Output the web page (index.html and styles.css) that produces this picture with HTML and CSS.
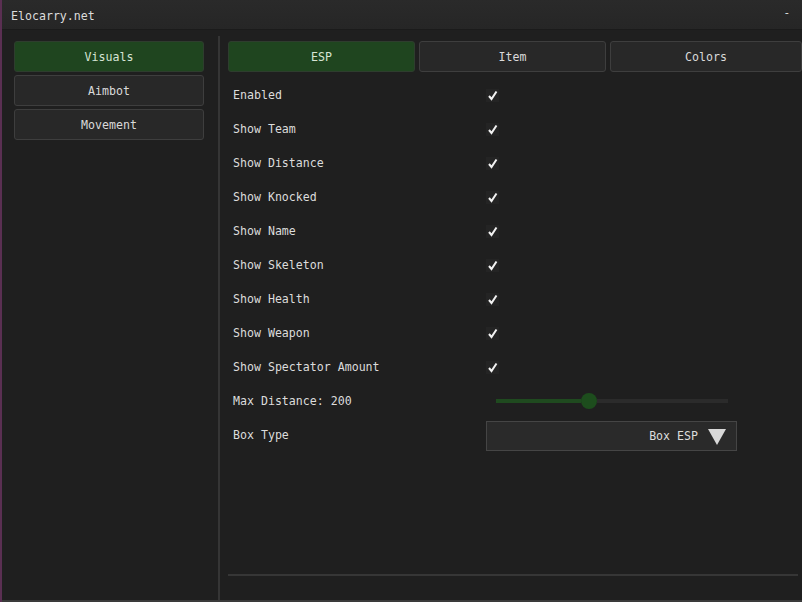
FILE: index.html
```html
<!DOCTYPE html>
<html>
<head>
<meta charset="utf-8">
<link rel="stylesheet" href="styles.css">
</head>
<body>
<div class="window">
  <div class="titlebar">
    <span class="title">Elocarry.net</span>
    <span class="minimize">-</span>
  </div>
  <div class="main">
    <div class="sidebar">
      <div class="btn active">Visuals</div>
      <div class="btn">Aimbot</div>
      <div class="btn">Movement</div>
    </div>
    <div class="divider"></div>
    <div class="content">
      <div class="tabs">
        <div class="btn tab active">ESP</div>
        <div class="btn tab">Item</div>
        <div class="btn tab last">Colors</div>
      </div>
      <div class="rows">
        <div class="row"><span class="label">Enabled</span><span class="check"><svg viewBox="0 0 13 13" width="13" height="13"><path d="M3 7 L5.5 10 L10.5 2.5" fill="none" stroke="#f2f2f2" stroke-width="2"/></svg></span></div>
        <div class="row"><span class="label">Show Team</span><span class="check"><svg viewBox="0 0 13 13" width="13" height="13"><path d="M3 7 L5.5 10 L10.5 2.5" fill="none" stroke="#f2f2f2" stroke-width="2"/></svg></span></div>
        <div class="row"><span class="label">Show Distance</span><span class="check"><svg viewBox="0 0 13 13" width="13" height="13"><path d="M3 7 L5.5 10 L10.5 2.5" fill="none" stroke="#f2f2f2" stroke-width="2"/></svg></span></div>
        <div class="row"><span class="label">Show Knocked</span><span class="check"><svg viewBox="0 0 13 13" width="13" height="13"><path d="M3 7 L5.5 10 L10.5 2.5" fill="none" stroke="#f2f2f2" stroke-width="2"/></svg></span></div>
        <div class="row"><span class="label">Show Name</span><span class="check"><svg viewBox="0 0 13 13" width="13" height="13"><path d="M3 7 L5.5 10 L10.5 2.5" fill="none" stroke="#f2f2f2" stroke-width="2"/></svg></span></div>
        <div class="row"><span class="label">Show Skeleton</span><span class="check"><svg viewBox="0 0 13 13" width="13" height="13"><path d="M3 7 L5.5 10 L10.5 2.5" fill="none" stroke="#f2f2f2" stroke-width="2"/></svg></span></div>
        <div class="row"><span class="label">Show Health</span><span class="check"><svg viewBox="0 0 13 13" width="13" height="13"><path d="M3 7 L5.5 10 L10.5 2.5" fill="none" stroke="#f2f2f2" stroke-width="2"/></svg></span></div>
        <div class="row"><span class="label">Show Weapon</span><span class="check"><svg viewBox="0 0 13 13" width="13" height="13"><path d="M3 7 L5.5 10 L10.5 2.5" fill="none" stroke="#f2f2f2" stroke-width="2"/></svg></span></div>
        <div class="row"><span class="label">Show Spectator Amount</span><span class="check"><svg viewBox="0 0 13 13" width="13" height="13"><path d="M3 7 L5.5 10 L10.5 2.5" fill="none" stroke="#f2f2f2" stroke-width="2"/></svg></span></div>
        <div class="row"><span class="label">Max Distance: 200</span>
          <div class="slider"><div class="fill"></div><div class="knob"></div><div class="rest"></div></div>
        </div>
        <div class="row"><span class="label">Box Type</span>
          <div class="combo"><span class="combo-text">Box ESP</span><svg class="arrow" viewBox="0 0 18 18" width="18" height="18"><path d="M0 2 L18 2 L9 18 Z" fill="#d8d8d8"/></svg></div>
        </div>
      </div>
      <div class="spacer"></div>
      <div class="footer-line"></div>
    </div>
  </div>
</div>
</body>
</html>
```
FILE: styles.css
```css
html, body {
  margin: 0;
  padding: 0;
  width: 802px;
  height: 602px;
  overflow: hidden;
  background: #5a2f52;
}
body {
  font-family: "DejaVu Sans Mono", "Liberation Mono", monospace;
  font-size: 11.6px;
  color: #dcdcdc;
}
.window {
  margin-left: 2px;
  width: 800px;
  height: 600px;
  background: #1f1f1f;
  display: flex;
  flex-direction: column;
  border-bottom: 2px solid #3a3a3a;
  box-sizing: content-box;
}
.titlebar {
  height: 30px;
  background: linear-gradient(#2a2a2a, #262626);
  display: flex;
  align-items: center;
  justify-content: space-between;
  padding: 0 12px 0 9px;
  border-bottom: 1px solid #1b1b1b;
  box-sizing: border-box;
  flex-shrink: 0;
}
.title { padding-top: 2px; }
.minimize { font-size: 11px; color: #e6e6e6; padding-bottom: 4px; }
.main {
  flex: 1;
  display: flex;
  padding-top: 11px;
}
.sidebar {
  margin-left: 12px;
  width: 190px;
  display: flex;
  flex-direction: column;
  gap: 3px;
}
.btn {
  height: 31px;
  box-sizing: border-box;
  border: 1px solid #3e3e3e;
  border-radius: 3px;
  background: #282828;
  display: flex;
  align-items: center;
  justify-content: center;
  color: #dadada;
}
.btn.active {
  background: #1f451f;
  border-color: #2e3d2e;
  color: #d6e4d4;
}
.divider {
  width: 2px;
  background: #353535;
  margin-left: 14px;
  margin-top: -5px;
}
.content {
  flex: 1;
  margin-left: 8px;
  margin-right: 0;
  display: flex;
  flex-direction: column;
}
.tabs {
  display: flex;
  gap: 4px;
}
.tab { flex: 0 0 187px; }
.tab.last { flex: 1; }
.rows {
  margin-top: 6px;
  display: flex;
  flex-direction: column;
}
.row {
  height: 34px;
  display: flex;
  align-items: center;
}
.label {
  width: 258px;
  padding-left: 5px;
  box-sizing: border-box;
  flex-shrink: 0;
}
.check {
  width: 13px;
  height: 13px;
  background: #242424;
  display: flex;
  margin-top: 1px;
}
.slider {
  margin-left: 10px;
  width: 232px;
  height: 18px;
  display: flex;
  align-items: center;
}
.fill {
  width: 85px;
  height: 4px;
  background: #1f4a1f;
}
.knob {
  width: 16px;
  height: 16px;
  border-radius: 50%;
  background: #1d4d1d;
  flex-shrink: 0;
}
.rest {
  flex: 1;
  height: 4px;
  background: #2b2b2b;
}
.combo {
  width: 251px;
  height: 30px;
  box-sizing: border-box;
  border: 1px solid #454545;
  background: #2a2a2a;
  display: flex;
  align-items: center;
  justify-content: flex-end;
  padding-right: 10px;
  gap: 10px;
  margin-top: 1px;
}
.combo-text { color: #dcdcdc; }
.arrow { margin-top: 1px; }
.spacer { flex: 1; }
.footer-line {
  height: 2px;
  background: #363636;
  margin-bottom: 24px;
  margin-right: 4px;
}
```
